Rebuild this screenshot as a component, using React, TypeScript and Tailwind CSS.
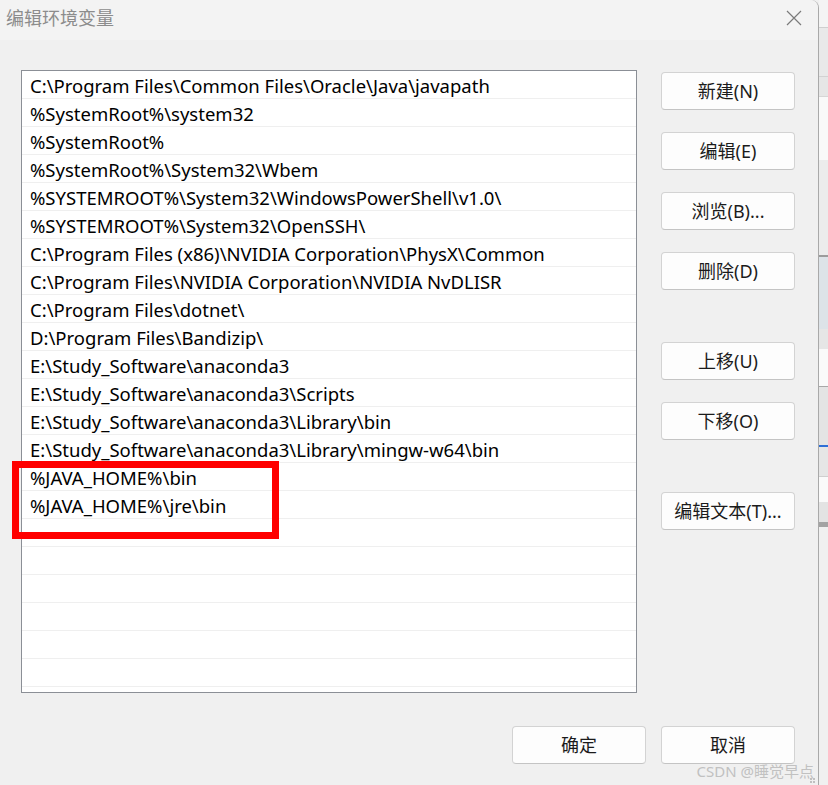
import React from "react";

const rows = [
  "C:\\Program Files\\Common Files\\Oracle\\Java\\javapath",
  "%SystemRoot%\\system32",
  "%SystemRoot%",
  "%SystemRoot%\\System32\\Wbem",
  "%SYSTEMROOT%\\System32\\WindowsPowerShell\\v1.0\\",
  "%SYSTEMROOT%\\System32\\OpenSSH\\",
  "C:\\Program Files (x86)\\NVIDIA Corporation\\PhysX\\Common",
  "C:\\Program Files\\NVIDIA Corporation\\NVIDIA NvDLISR",
  "C:\\Program Files\\dotnet\\",
  "D:\\Program Files\\Bandizip\\",
  "E:\\Study_Software\\anaconda3",
  "E:\\Study_Software\\anaconda3\\Scripts",
  "E:\\Study_Software\\anaconda3\\Library\\bin",
  "E:\\Study_Software\\anaconda3\\Library\\mingw-w64\\bin",
  "%JAVA_HOME%\\bin",
  "%JAVA_HOME%\\jre\\bin",
  "",
  "",
  "",
  "",
  "",
  "",
];

const font = { fontFamily: '"Noto Sans", "Noto Sans CJK SC", sans-serif' };

function Btn({ label, className = "" }: { label: string; className?: string }) {
  return (
    <div
      className={
        "w-[134px] h-[38px] rounded-[4px] border border-[#d3d3d3] border-b-[#c4c4c4] bg-[#fdfdfd] flex items-center justify-center text-[18px] text-[#1b1b1b] " +
        className
      }
    >
      {label}
    </div>
  );
}

export default function App() {
  return (
    <div className="w-[828px] h-[785px] flex overflow-hidden bg-[#f0f0f0]" style={font}>
      {/* dialog */}
      <div className="relative w-[819px] h-[785px] flex flex-col bg-[#f0f0f0] border-r border-[#a9a9a9] rounded-tr-[8px]">
        <div className="h-[40px] shrink-0 bg-[#f3f3f3] flex items-center justify-between pl-[6px] pr-[16px] rounded-tr-[8px]">
          <span className="text-[18px] text-[#8c8c8c] leading-none -mt-[4px]">编辑环境变量</span>
          <svg width="16" height="16" viewBox="0 0 16 16" className="-mt-[4px]">
            <path d="M1 1 L15 15 M15 1 L1 15" stroke="#7a7a7a" strokeWidth="1.2" fill="none" />
          </svg>
        </div>
        <div className="flex pl-[21px] pt-[30px] gap-[24px]">
          <div className="relative w-[616px] h-[623px] border border-[#8b8f96] bg-white">
            {rows.map((r, i) => (
              <div
                key={i}
                className="h-[28px] border-b border-[#efefef] pl-[8px] pt-[3px] flex items-center text-[18.5px] text-black whitespace-nowrap leading-none"
              >
                {r}
              </div>
            ))}
          </div>
          <div className="flex flex-col pt-[2px]">
            <Btn label="新建(N)" />
            <Btn label="编辑(E)" className="mt-[22px]" />
            <Btn label="浏览(B)..." className="mt-[22px]" />
            <Btn label="删除(D)" className="mt-[22px]" />
            <Btn label="上移(U)" className="mt-[52px]" />
            <Btn label="下移(O)" className="mt-[22px]" />
            <Btn label="编辑文本(T)..." className="mt-[52px]" />
          </div>
        </div>
        <div className="flex justify-end gap-[15px] pr-[23px] mt-[33px]">
          <Btn label="确定" />
          <Btn label="取消" />
        </div>
        {/* red highlight */}
        <div className="absolute left-[12px] top-[461px] w-[267px] h-[78px] border-[7px] border-[#ff0000]" />
        {/* watermark */}
        <div className="absolute right-[4px] bottom-[6px] text-[15px] text-[#bcbcbc] leading-none opacity-90">
          CSDN @睡觉早点
        </div>
        <div className="absolute right-[3px] bottom-[2px] grid grid-cols-2 gap-[1px]">
          <span className="w-[2px] h-[2px] bg-[#c0c0c0]" />
          <span className="w-[2px] h-[2px] bg-[#c0c0c0]" />
          <span className="w-[2px] h-[2px] bg-[#c0c0c0]" />
          <span className="w-[2px] h-[2px] bg-[#c0c0c0]" />
        </div>
      </div>
      {/* background window strip */}
      <div className="w-[9px] h-[785px] flex flex-col">
        <div className="h-[28px] bg-[#f4f4f4] border-b border-[#cfcfcf]" />
        <div className="h-[49px] bg-[#e9e9e9] border-b border-[#d2d2d2]" />
        <div className="h-[20px] bg-[#e6e6e6] border-b border-[#d6d6d6]" />
        <div className="h-[63px] bg-[#f9f9f9]" />
        <div className="h-[97px] bg-[#ececec] border-b-2 border-[#9c9c9c]" />
        <div className="h-[72px] bg-[#dde3e8]" />
        <div className="h-[20px] bg-[#e6e6e6]" />
        <div className="h-[38px] bg-[#fafafa] border-b border-[#a8a8a8]" />
        <div className="h-[60px] bg-[#e4e4e4] border-b-2 border-[#2f6fd6]" />
        <div className="h-[30px] bg-[#e6e6e6] border-b border-[#cfcfcf]" />
        <div className="h-[25px] bg-[#fafafa]" />
        <div className="h-[25px] bg-[#e3e3e3] border-b-[5px] border-[#a3a3a3]" />
        <div className="flex-1 bg-[#f0f0f0]" />
      </div>
    </div>
  );
}
